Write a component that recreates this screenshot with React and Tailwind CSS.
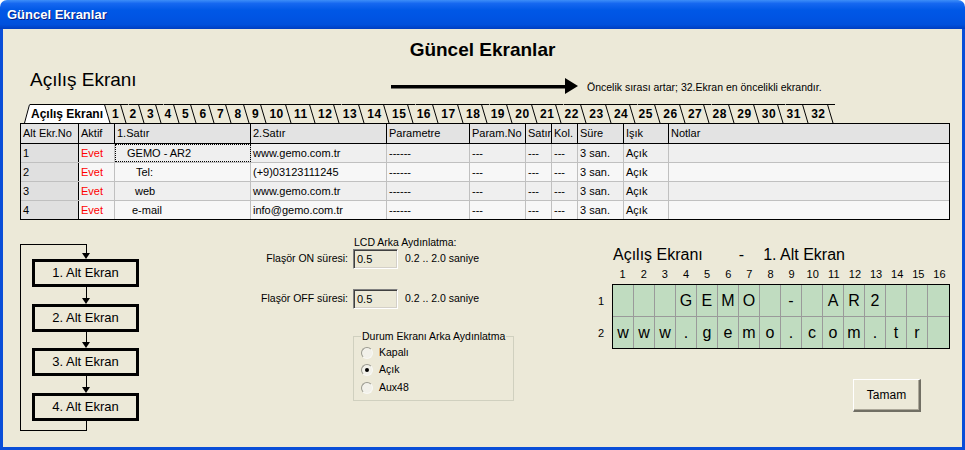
import { Fragment } from "react";

const tabNums = Array.from({ length: 32 }, (_, i) => i + 1);

const headers = ["Alt Ekr.No", "Aktif", "1.Satır", "2.Satır", "Parametre", "Param.No", "Satır", "Kol.", "Süre", "Işık", "Notlar"];

const rows = [
  { no: "1", line1: "GEMO - AR2", pad: "pl-[12px]", line2: "www.gemo.com.tr", bg: "bg-[#efefef]", focus: true },
  { no: "2", line1: "Tel:", pad: "pl-[21px]", line2: "(+9)03123111245", bg: "bg-[#f7f7f7]" },
  { no: "3", line1: "web", pad: "pl-[20px]", line2: "www.gemo.com.tr", bg: "bg-[#efefef]" },
  { no: "4", line1: "e-mail", pad: "pl-[17px]", line2: "info@gemo.com.tr", bg: "bg-[#f7f7f7]" },
];

const lcdRows = [
  ["", "", "", "G", "E", "M", "O", "", "-", "", "A", "R", "2", "", "", ""],
  ["w", "w", "w", ".", "g", "e", "m", "o", ".", "c", "o", "m", ".", "t", "r", ""],
];

function Slant({ active, w = 9.3 }) {
  return (
    <svg width={w} height="19" className="block shrink-0">
      {active && <polygon points="0,0 2,0 7,19 0,19" fill="#fff" />}
      <line x1="0" y1="0.5" x2={w} y2="0.5" stroke="#000" />
      <line x1="1.5" y1="0.5" x2="7" y2="19" stroke="#000" />
    </svg>
  );
}

function TabStrip() {
  return (
    <div className="flex h-[19px] ml-[4px] mt-[13px]">
      <svg width="6" height="19" className="block shrink-0">
        <polygon points="0,19 5,0 6,0 6,19" fill="#fff" />
        <line x1="0.5" y1="19" x2="5.5" y2="0.5" stroke="#000" />
      </svg>
      <div className="bg-white border-t border-black pl-[1px] font-bold text-[12px] leading-[18px]">Açılış Ekranı</div>
      <Slant active w={8} />
      {tabNums.map((n) => (
        <Fragment key={n}>
          <div className="border-t border-black pl-[1px] font-bold text-[12px] tracking-[0.5px] leading-[18px]">{n}</div>
          <Slant />
        </Fragment>
      ))}
    </div>
  );
}

function Table() {
  const grid = "grid grid-cols-[58px_36px_136px_136px_83px_56px_26px_26px_46px_45px_1fr]";
  return (
    <div className="w-[930px] border border-black text-[11px] leading-[13px]">
      <div className={`${grid} h-[20px] bg-[#e3e3e3] border-b border-black`}>
        {headers.map((h, i) => (
          <div key={h} className={`flex items-center pl-[2px] ${i < headers.length - 1 ? "border-r border-black" : ""}`}>
            {h}
          </div>
        ))}
      </div>
      {rows.map((r, idx) => {
        const last = idx === rows.length - 1;
        const rowCls = last ? "h-[18px]" : "h-[19px] border-b border-[#c0c0c0]";
        const cell = "flex items-center pl-[2px] border-r border-[#c0c0c0]";
        return (
          <div key={r.no} className={`${grid} ${rowCls} ${r.bg}`}>
            <div className="flex items-center pl-[2px] border-r border-black bg-[#e0e0e0]">{r.no}</div>
            <div className={`${cell} text-[#ff0000]`}>Evet</div>
            <div className={`flex items-center border-r border-[#c0c0c0] ${r.pad} ${r.focus ? "outline outline-1 outline-dotted outline-black -outline-offset-1" : ""}`}>{r.line1}</div>
            <div className={cell}>{r.line2}</div>
            <div className={cell}>------</div>
            <div className={cell}>---</div>
            <div className={cell}>---</div>
            <div className={cell}>---</div>
            <div className={cell}>3 san.</div>
            <div className={cell}>Açık</div>
            <div />
          </div>
        );
      })}
    </div>
  );
}

function Connector({ h }) {
  return (
    <div className={`flex flex-col items-center ${h}`}>
      <div className="w-px flex-1 bg-black ml-px" />
      <div className="w-0 h-0 border-l-[4px] border-r-[4px] border-t-[6px] border-l-transparent border-r-transparent border-t-black ml-px" />
    </div>
  );
}

function FlowBox({ label }) {
  return (
    <div className="w-[107px] h-[28px] border-[3px] border-black flex items-center justify-center text-[13px]">
      {label}
    </div>
  );
}

function Flow() {
  return (
    <div className="w-[120px] shrink-0">
      <div className="mt-[14px] w-[67px] border-l border-t border-b border-black">
        <div className="ml-[11px] w-[107px] flex flex-col">
          <Connector h="h-[14px]" />
          <FlowBox label="1. Alt Ekran" />
          <Connector h="h-[17px]" />
          <FlowBox label="2. Alt Ekran" />
          <Connector h="h-[16px]" />
          <FlowBox label="3. Alt Ekran" />
          <Connector h="h-[17px]" />
          <FlowBox label="4. Alt Ekran" />
          <div className="h-[9px] flex justify-center">
            <div className="w-px h-full bg-black ml-px" />
          </div>
        </div>
      </div>
    </div>
  );
}

function SunkenField({ value }) {
  return (
    <div className="ml-[5px] w-[45px] h-[20px] border border-t-[#808080] border-l-[#808080] border-r-white border-b-white shadow-[inset_1px_1px_0_#404040,inset_-1px_-1px_0_#d4d0c8] flex items-center pl-[3px] text-[11px]">
      {value}
    </div>
  );
}

function Radio({ checked, label, h }) {
  return (
    <div className={`flex items-center pl-[7px] ${h}`}>
      <span className="w-[12px] h-[12px] rounded-full border border-t-[#9a9a90] border-l-[#9a9a90] border-r-[#f8f8f4] border-b-[#f8f8f4] bg-[#f2f1ea] flex items-center justify-center">
        {checked && <span className="w-[4px] h-[4px] rounded-full bg-black" />}
      </span>
      <span className="ml-[6px]">{label}</span>
    </div>
  );
}

function Middle() {
  return (
    <div className="ml-[120px] w-[254px] shrink-0 text-[10.5px]">
      <div className="mt-[6px] pl-[94px] leading-[13px]">LCD Arka Aydınlatma:</div>
      <div className="flex items-center h-[20px]">
        <div className="w-[88px] text-right">Flaşör ON süresi:</div>
        <SunkenField value="0.5" />
        <div className="ml-[7px]">0.2 .. 2.0 saniye</div>
      </div>
      <div className="flex items-center h-[20px] mt-[20px]">
        <div className="w-[88px] text-right whitespace-nowrap">Flaşör OFF süresi:</div>
        <SunkenField value="0.5" />
        <div className="ml-[7px]">0.2 .. 2.0 saniye</div>
      </div>
      <div className="relative mt-[27px] ml-[93px] w-[161px] h-[65px] border border-[#d0d0bf] pt-[7px]">
        <span className="absolute -top-[7px] left-[7px] bg-[#ece9d8] px-[1px] leading-[13px]">Durum Ekranı Arka Aydınlatma</span>
        <Radio label="Kapalı" h="h-[17px]" />
        <Radio label="Açık" checked h="h-[18px]" />
        <Radio label="Aux48" h="h-[17px]" />
      </div>
    </div>
  );
}

function Lcd() {
  return (
    <div className="ml-[83px] w-[353px] shrink-0">
      <div className="mt-[16px] pl-[16px] flex text-[16px] leading-[18px]">
        <span>Açılış Ekranı</span>
        <span className="ml-[36px]">-</span>
        <span className="ml-[19px]">1. Alt Ekran</span>
      </div>
      <div className="mt-[4px] ml-[15px] w-[338px] grid grid-cols-16 text-[11px] leading-[13px] text-center">
        {Array.from({ length: 16 }, (_, i) => (
          <span key={i}>{i + 1}</span>
        ))}
      </div>
      <div className="mt-[3px] flex">
        <div className="w-[15px] flex flex-col text-[11px] pt-px">
          <div className="h-[32px] flex items-center pl-[1px]">1</div>
          <div className="h-[32px] flex items-center pl-[1px]">2</div>
        </div>
        <div className="w-[339px] border border-black bg-[#c0dcc0]">
          {lcdRows.map((row, ri) => (
            <div key={ri} className={`grid grid-cols-16 h-[31px] ${ri === 0 ? "box-content border-b border-[#9a9a9a]" : ""}`}>
              {row.map((ch, ci) => (
                <div key={ci} className={`flex items-center justify-center text-[16px] ${ci < 15 ? "border-r border-[#9a9a9a]" : ""}`}>
                  {ch}
                </div>
              ))}
            </div>
          ))}
        </div>
      </div>
      <button className="mt-[30px] ml-[256px] w-[68px] h-[33px] bg-[#ece9d8] border-t border-l border-t-white border-l-white border-b-2 border-r-2 border-b-[#716f64] border-r-[#716f64] shadow-[inset_-1px_-1px_0_#aca899] text-[12px] flex items-center justify-center">
        Tamam
      </button>
    </div>
  );
}

export default function App() {
  return (
    <div className="w-[965px] h-[450px] bg-white [font-family:'Liberation_Sans',Arial,sans-serif] text-black">
      <div className="w-full h-full flex flex-col rounded-t-[7px] overflow-hidden">
        <div className="h-[29px] shrink-0 flex items-center pl-[7px] bg-[linear-gradient(to_bottom,#3d8ef8_0%,#1668f0_12%,#0058e6_35%,#0054e3_60%,#0050dc_85%,#003ec0_100%)]">
          <span className="text-white font-bold text-[13px] [text-shadow:1px_1px_#0a1e80]">Güncel Ekranlar</span>
        </div>
        <div className="flex-1 flex bg-[#0a4ed8]">
          <div className="w-[3px] shrink-0" />
          <div className="flex-1 flex flex-col bg-[#ece9d8] pl-[17px] pt-[10px]">
            <div className="h-[22px] leading-[22px] text-center font-bold text-[19px] pr-[17px]">Güncel Ekranlar</div>
            <div className="mt-[8px] h-[22px] flex items-start">
              <span className="w-[371px] pl-[10px] text-[19px] leading-[22px] shrink-0">Açılış Ekranı</span>
              <svg width="188" height="16" className="mt-[9px] block shrink-0">
                <rect x="0" y="7" width="175" height="3.5" fill="#000" />
                <polygon points="174,0 187,8 174,16" fill="#000" />
              </svg>
              <span className="ml-[8px] mt-[12px] text-[10.5px] leading-[13px]">Öncelik sırası artar; 32.Ekran en öncelikli ekrandır.</span>
            </div>
            <TabStrip />
            <Table />
            <div className="mt-[10px] flex">
              <Flow />
              <Middle />
              <Lcd />
            </div>
          </div>
          <div className="w-[3px] shrink-0" />
        </div>
        <div className="h-[3px] shrink-0 bg-[#0a4ed8]" />
      </div>
    </div>
  );
}
